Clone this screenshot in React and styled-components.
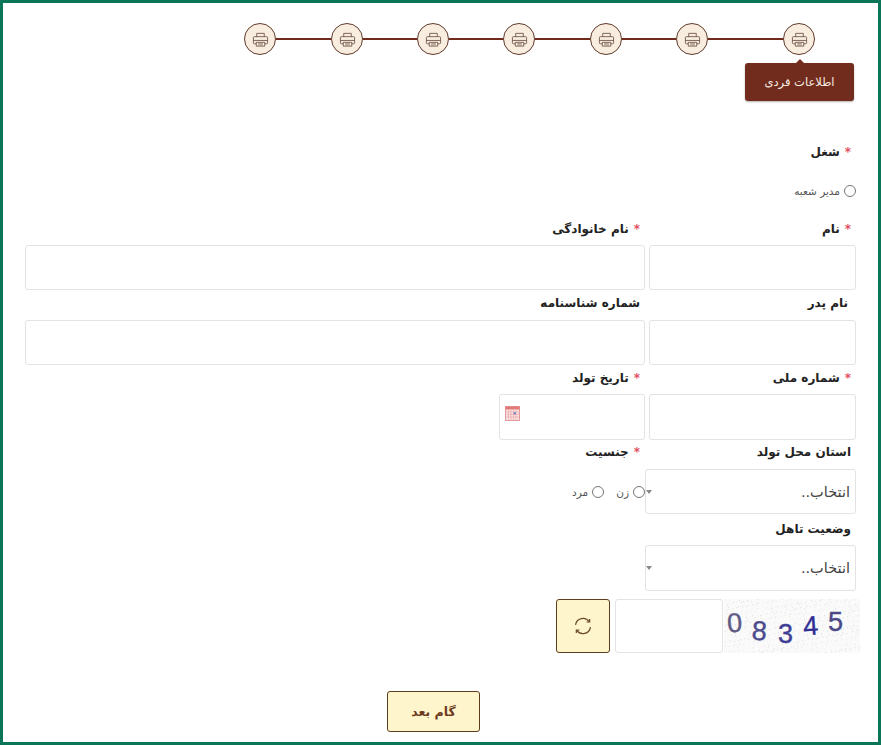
import React from 'react';
import styled, { createGlobalStyle } from 'styled-components';

const GlobalStyle = createGlobalStyle`
  html, body { margin: 0; padding: 0; background: #fff; }
  * { box-sizing: border-box; }
  body { font-family: "DejaVu Sans", "Noto Sans", sans-serif; }
`;

const Frame = styled.div`
  width: 881px;
  height: 745px;
  border: 3px solid #0b7558;
  padding: 20px 22px 0 22px;
  direction: rtl;
  background: #fff;
  overflow: hidden;
`;

const Stepper = styled.div`
  display: flex;
  align-items: center;
  height: 32px;
  padding-right: 41px;
`;

const Step = styled.div`
  position: relative;
  width: 32px;
  height: 32px;
  flex: none;
  border-radius: 50%;
  border: 1px solid #5f3a2c;
  background: #f8eddf;
  display: flex;
  align-items: center;
  justify-content: center;
`;

const Connector = styled.div`
  width: ${p => p.$w}px;
  height: 2px;
  flex: none;
  background: #722c1e;
`;

const Tip = styled.div`
  position: absolute;
  top: 39px;
  right: -40px;
  width: 109px;
  height: 38px;
  border-radius: 3px;
  background: #722c1e;
  color: #f6ebe0;
  font-size: 11.5px;
  display: flex;
  align-items: center;
  justify-content: center;
  white-space: nowrap;
  box-shadow: 0 1px 2px rgba(0, 0, 0, 0.3);

  &::before {
    content: "";
    position: absolute;
    top: -4px;
    left: 50%;
    margin-left: -4px;
    border: 4px solid transparent;
    border-top: 0;
    border-bottom-color: #722c1e;
  }
`;

const Form = styled.div`
  margin-top: 87px;
`;

const Label = styled.div`
  height: 20px;
  line-height: 20px;
  padding-right: ${p => p.$pad ?? 5}px;
  margin-bottom: ${p => p.$gap ?? 6}px;
  font-size: 12px;
  font-weight: 700;
  color: #222;
  white-space: nowrap;
`;

const Star = styled.span`
  color: #e0505f;
  margin-left: 5px;
`;

const RadioRow = styled.div`
  display: flex;
  align-items: center;
  gap: ${p => p.$gap ?? 0}px;
  height: ${p => p.$h ?? 20}px;
  margin-bottom: ${p => p.$after ?? 0}px;
`;

const RadioItem = styled.label`
  display: flex;
  align-items: center;
  gap: 4px;
  font-size: 10.5px;
  color: #555;
  position: relative;
`;

const Radio = styled.input.attrs({ type: 'radio' })`
  width: 12px;
  height: 12px;
  margin: 0;
`;

const Row = styled.div`
  display: grid;
  grid-template-columns: 207px 620px;
  column-gap: 4px;
  margin-bottom: ${p => p.$after ?? 3}px;
`;

const Input = styled.input`
  display: block;
  width: 100%;
  height: ${p => p.$h ?? 45}px;
  border: 1px solid #e3e3e3;
  border-radius: 3px;
  background: #fff;
  outline: none;
`;

const DateBox = styled.div`
  position: relative;
  width: 146px;
`;

const CalendarIcon = styled.svg`
  position: absolute;
  left: 6px;
  top: 12px;
`;

const SelectBox = styled.div`
  position: relative;
  width: 211px;
  height: ${p => p.$h ?? 45}px;
  border: 1px solid #e3e3e3;
  border-radius: 3px;
  background: #fff;
  display: flex;
  align-items: center;
  padding-right: 5px;
  font-size: 14.5px;
  color: #444;

  &::after {
    content: "";
    position: absolute;
    left: 0;
    top: 50%;
    margin-top: -2px;
    border: 3px solid transparent;
    border-bottom: 0;
    border-top: 4px solid #888;
  }
`;

const CaptchaRow = styled.div`
  display: flex;
  align-items: stretch;
  height: 54px;
  margin: 8px -4px 0 0;
`;

const CaptchaImage = styled.svg`
  display: block;
  flex: none;
`;

const CaptchaInput = styled.input`
  width: 108px;
  height: 54px;
  margin-right: 1px;
  border: 1px solid #e3e3e3;
  border-radius: 3px;
  outline: none;
`;

const RefreshButton = styled.button`
  width: 54px;
  height: 54px;
  margin-right: 5px;
  padding: 0;
  border: 1px solid #5e3c1e;
  border-radius: 3px;
  background: #fff5cc;
  display: flex;
  align-items: center;
  justify-content: center;
`;

const Footer = styled.div`
  display: flex;
  justify-content: flex-start;
  margin-top: 38px;
  padding-right: 376px;
`;

const NextButton = styled.button`
  width: 93px;
  height: 41px;
  border: 1px solid #5e3c1e;
  border-radius: 3px;
  background: #fff5cc;
  color: #6b3a1e;
  font-family: inherit;
  font-size: 12.5px;
  font-weight: 700;
`;

const PrinterIcon = () => (
  <svg width="17" height="17" viewBox="0 0 18 18" fill="none" stroke="#6a5044" strokeWidth=".9">
    <path d="M5 6V2.5h8V6" />
    <rect x="1.5" y="6" width="15" height="7.5" rx="1" />
    <path d="M1.5 10h15" />
    <path d="M4.5 12v4h9v-4z" fill="#f8eddf" />
    <path d="M6.5 13.4h5M6.5 14.8h5" strokeWidth=".6" />
  </svg>
);

const RefreshIcon = () => (
  <svg width="20" height="20" viewBox="0 0 18 18" fill="none" stroke="#6b4a2a" strokeWidth="1.1">
    <path d="M2.3 8A6.8 6.8 0 0 1 14.6 5" />
    <path d="M15 2.6v2.8h-2.8" />
    <path d="M15.7 10A6.8 6.8 0 0 1 3.4 13" />
    <path d="M3 15.4v-2.8h2.8" />
  </svg>
);

const Calendar = () => (
  <CalendarIcon width="15" height="15" viewBox="0 0 15 15">
    <rect x=".5" y=".5" width="14" height="14" fill="#fbe4e4" stroke="#e39a9a" />
    <rect x=".5" y=".5" width="14" height="3" fill="#e37a7a" />
    <path d="M1 6h13M1 8.5h13M1 11h13M3.5 4v10M6 4v10M8.5 4v10M11 4v10" stroke="#eba9a9" strokeWidth=".7" />
    <rect x="8.7" y="6.2" width="2.2" height="2.2" fill="#6f84c9" />
  </CalendarIcon>
);

const noise = Array.from({ length: 520 }, (_, i) => ({
  x: (i * 73) % 136,
  y: (i * 37 + (i % 7) * 11) % 54,
  o: 0.1 + ((i * 13) % 10) / 28,
}));

const digits = [
  { c: '0', x: 3, y: 33, r: -4, f: '#5f5a86' },
  { c: '8', x: 28, y: 41, r: 4, f: '#4a4a8c' },
  { c: '3', x: 54, y: 44, r: 0, f: '#3f3f96' },
  { c: '4', x: 79, y: 36, r: -4, f: '#2f2f96' },
  { c: '5', x: 104, y: 32, r: 0, f: '#4b4a86' },
];

const Captcha = () => (
  <CaptchaImage width="136" height="54" viewBox="0 0 136 54">
    <rect width="136" height="54" fill="#fafafa" />
    {noise.map((n, i) => (
      <rect key={i} x={n.x} y={n.y} width="1.2" height="1.2" fill="#c4c4c4" opacity={n.o} />
    ))}
    {digits.map(d => (
      <text
        key={d.c}
        x={d.x}
        y={d.y}
        fill={d.f}
        stroke={d.f}
        strokeWidth=".4"
        fontFamily='"Liberation Sans", sans-serif'
        fontSize="27"
        direction="ltr"
        transform={`rotate(${d.r} ${d.x + 8} ${d.y - 10})`}
      >
        {d.c}
      </text>
    ))}
  </CaptchaImage>
);

const Required = () => <Star>*</Star>;

const steps = [75, 54, 55, 54, 54, 55, 0];

export default function App() {
  return (
    <>
      <GlobalStyle />
      <Frame>
        <Stepper>
          {steps.map((w, i) => (
            <React.Fragment key={i}>
              <Step>
                <PrinterIcon />
                {i === 0 && <Tip>اطلاعات فردی</Tip>}
              </Step>
              {w > 0 && <Connector $w={w} />}
            </React.Fragment>
          ))}
        </Stepper>

        <Form>
          <Label $gap={19}><Required />شغل</Label>
          <RadioRow $h={20} $after={18}>
            <RadioItem><Radio name="job" />مدیر شعبه</RadioItem>
          </RadioRow>

          <Row>
            <div>
              <Label><Required />نام</Label>
              <Input />
            </div>
            <div>
              <Label><Required />نام خانوادگی</Label>
              <Input />
            </div>
          </Row>

          <Row>
            <div>
              <Label $pad={8} $gap={7}>نام پدر</Label>
              <Input />
            </div>
            <div>
              <Label $gap={7}>شماره شناسنامه</Label>
              <Input />
            </div>
          </Row>

          <Row $after={2}>
            <div>
              <Label><Required />شماره ملی</Label>
              <Input $h={46} />
            </div>
            <div>
              <Label><Required />تاریخ تولد</Label>
              <DateBox>
                <Input $h={46} />
                <Calendar />
              </DateBox>
            </div>
          </Row>

          <Row $after={5}>
            <div>
              <Label $gap={7}>استان محل تولد</Label>
              <SelectBox>انتخاب..</SelectBox>
            </div>
            <div>
              <Label $gap={7}><Required />جنسیت</Label>
              <RadioRow $h={45} $gap={12}>
                <RadioItem><Radio name="gender" />زن</RadioItem>
                <RadioItem><Radio name="gender" />مرد</RadioItem>
              </RadioRow>
            </div>
          </Row>

          <Row $after={0}>
            <div>
              <Label>وضعیت تاهل</Label>
              <SelectBox $h={46}>انتخاب..</SelectBox>
            </div>
          </Row>

          <CaptchaRow>
            <Captcha />
            <CaptchaInput />
            <RefreshButton><RefreshIcon /></RefreshButton>
          </CaptchaRow>

          <Footer>
            <NextButton>گام بعد</NextButton>
          </Footer>
        </Form>
      </Frame>
    </>
  );
}
